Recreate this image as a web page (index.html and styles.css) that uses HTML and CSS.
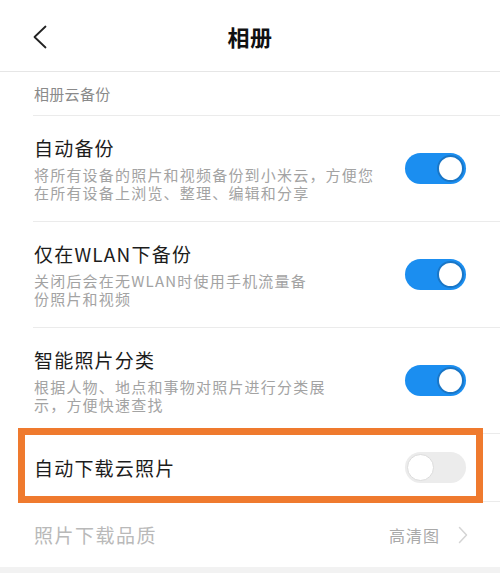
FILE: index.html
```html
<!DOCTYPE html>
<html lang="zh-CN">
<head>
<meta charset="utf-8">
<title>相册</title>
<link rel="stylesheet" href="styles.css">
</head>
<body>
<div class="page">
  <header class="header">
    <div class="back">
      <svg width="16" height="26" viewBox="0 0 16 26"><path d="M13.5 2.5 L2.5 13 L13.5 23.5" fill="none" stroke="#222" stroke-width="1.8" stroke-linecap="round" stroke-linejoin="round"/></svg>
    </div>
    <h1 class="title">相册</h1>
    <div></div>
  </header>
  <div class="section">相册云备份</div>
  <div class="row tall">
    <div class="text">
      <div class="name">自动备份</div>
      <div class="desc">将所有设备的照片和视频备份到小米云，方便您<br>在所有设备上浏览、整理、编辑和分享</div>
    </div>
    <div class="toggle on"><span class="knob"></span></div>
  </div>
  <div class="row tall">
    <div class="text">
      <div class="name">仅在WLAN下备份</div>
      <div class="desc">关闭后会在无WLAN时使用手机流量备<br>份照片和视频</div>
    </div>
    <div class="toggle on"><span class="knob"></span></div>
  </div>
  <div class="row tall">
    <div class="text">
      <div class="name">智能照片分类</div>
      <div class="desc">根据人物、地点和事物对照片进行分类展<br>示，方便快速查找</div>
    </div>
    <div class="toggle on"><span class="knob"></span></div>
  </div>
  <div class="row single">
    <div class="name">自动下载云照片</div>
    <div class="toggle off"><span class="knob"></span></div>
    <div class="highlight"></div>
  </div>
  <div class="row last">
    <div class="name muted">照片下载品质</div>
    <div class="value">
      <span>高清图</span>
      <svg width="10" height="18" viewBox="0 0 10 18"><path d="M1.5 1.5 L8.5 9 L1.5 16.5" fill="none" stroke="#d4d4d4" stroke-width="1.5" stroke-linecap="round" stroke-linejoin="round"/></svg>
    </div>
  </div>
  <div class="footer"></div>
</div>
</body>
</html>
```
FILE: styles.css
```css
* { box-sizing: border-box; }
html, body { margin: 0; padding: 0; background: #fff; }
body {
  font-family: "Noto Sans CJK SC", "Noto Sans", sans-serif;
  color: #1c1c1c;
  width: 500px;
  height: 573px;
  overflow: hidden;
}
.page { display: flex; flex-direction: column; }
.header {
  height: 72px;
  border-bottom: 1px solid #e6e6e6;
  display: grid;
  grid-template-columns: 1fr auto 1fr;
  align-items: center;
}
.back { padding-left: 32px; padding-top: 2px; display: flex; align-items: center; }
.title {
  margin: 0;
  font-size: 22px;
  font-weight: 700;
  line-height: 30px;
  letter-spacing: 0.5px;
  color: #111;
}
.section {
  height: 44px;
  margin-left: 33px;
  padding-left: 1px;
  border-bottom: 1px solid #ebebeb;
  display: flex;
  align-items: center;
  font-size: 15px;
  color: #8a8a8a;
  letter-spacing: 0.3px;
}
.row {
  position: relative;
  margin-left: 33px;
  padding: 0 34px 0 1px;
  border-bottom: 1px solid #ebebeb;
  display: flex;
  align-items: center;
  justify-content: space-between;
}
.row.tall { height: 106px; }
.row.single { height: 68px; }
.row.last { height: 65px; border-bottom: none; }
.text { display: flex; flex-direction: column; }
.name {
  font-size: 19px;
  line-height: 26px;
  letter-spacing: 1.2px;
  color: #1c1c1c;
}
.name.muted { color: #b9b9b9; font-size: 19px; letter-spacing: 1.5px; }
.desc {
  margin-top: 5px;
  font-size: 15px;
  line-height: 18px;
  letter-spacing: 1.2px;
  color: #a3a3a3;
}
.toggle {
  width: 61px;
  height: 31px;
  border-radius: 16px;
  position: relative;
  flex-shrink: 0;
  display: flex;
  align-items: center;
  padding: 0 2px;
}
.toggle.on { background: #1b8ef0; justify-content: flex-end; }
.toggle.off { background: #ececec; justify-content: flex-start; }
.knob {
  width: 27px;
  height: 27px;
  border-radius: 50%;
  background: #fff;
}
.toggle.on .knob { border: 2px solid #1a76c6; }
.toggle.off .knob { border: 1px solid #dcdcdc; }
.value {
  display: flex;
  align-items: center;
  gap: 18px;
  font-size: 16px;
  color: #a9a9a9;
  letter-spacing: 1px;
}
.value svg { margin-right: -2px; }
.highlight {
  position: absolute;
  left: -15px;
  right: 17px;
  top: -6px;
  bottom: -2px;
  border: 7px solid #ef7a2e;
  pointer-events: none;
}
.footer { height: 6px; background: #f2f2f2; }
```
